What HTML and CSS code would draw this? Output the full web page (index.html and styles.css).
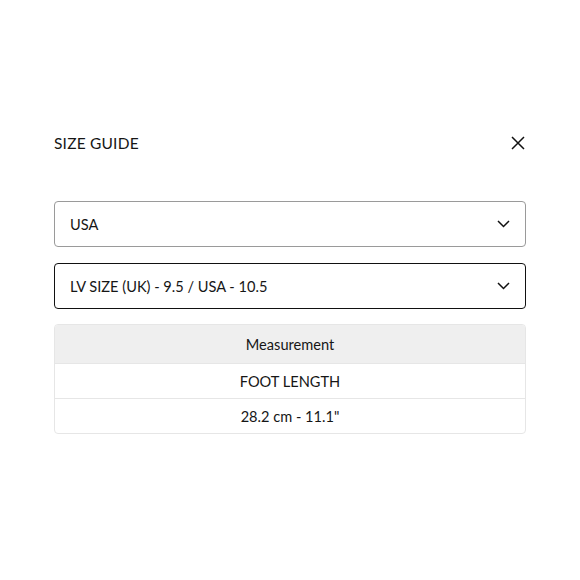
FILE: index.html
```html
<!DOCTYPE html>
<html>
<head>
<meta charset="utf-8">
<link rel="stylesheet" href="styles.css">
</head>
<body>
<div class="panel">
  <div class="header">
    <h1 class="title">SIZE GUIDE</h1>
    <button class="close" aria-label="Close">
      <svg width="14" height="14" viewBox="0 0 14 14"><path d="M1 1L13 13M13 1L1 13" stroke="#111" stroke-width="1.5" fill="none"/></svg>
    </button>
  </div>
  <div class="select select-muted">
    <span>USA</span>
    <svg class="chev" width="13" height="8" viewBox="0 0 13 8"><path d="M1 1L6.5 6.5L12 1" stroke="#111" stroke-width="1.5" fill="none"/></svg>
  </div>
  <div class="select select-active">
    <span>LV SIZE (UK) - 9.5 / USA - 10.5</span>
    <svg class="chev" width="13" height="8" viewBox="0 0 13 8"><path d="M1 1L6.5 6.5L12 1" stroke="#111" stroke-width="1.5" fill="none"/></svg>
  </div>
  <div class="table">
    <div class="row row-head">Measurement</div>
    <div class="row">FOOT LENGTH</div>
    <div class="row">28.2 cm - 11.1"</div>
  </div>
</div>
</body>
</html>
```
FILE: styles.css
```css
html, body { margin: 0; padding: 0; background: #fff; }
body { font-family: Lato, "Noto Sans", sans-serif; color: #161616; }
.panel { padding: 130px 54px 0 54px; display: flex; flex-direction: column; }
.header { display: flex; justify-content: space-between; align-items: center; height: 26px; margin-bottom: 45px; }
.title { margin: 0; font-size: 15.5px; font-weight: 400; letter-spacing: 0.2px; }
.close { background: none; border: 0; padding: 0; width: 14px; height: 14px; margin-right: 1px; display: flex; }
.select { box-sizing: border-box; height: 46px; border-radius: 4px; display: flex; align-items: center; justify-content: space-between; padding: 0 15px 0 15px; font-size: 14.6px; }
.select-muted { border: 1px solid #9a9a9a; margin-bottom: 16px; }
.select-active { border: 1.5px solid #111; margin-bottom: 15px; }
.table { border: 1px solid #e6e6e6; border-radius: 4px; overflow: hidden; }
.row { height: 34px; display: flex; align-items: center; justify-content: center; font-size: 14.6px; border-top: 1px solid #e6e6e6; }
.row-head { background: #efefef; border-top: 0; height: 38px; }
```
